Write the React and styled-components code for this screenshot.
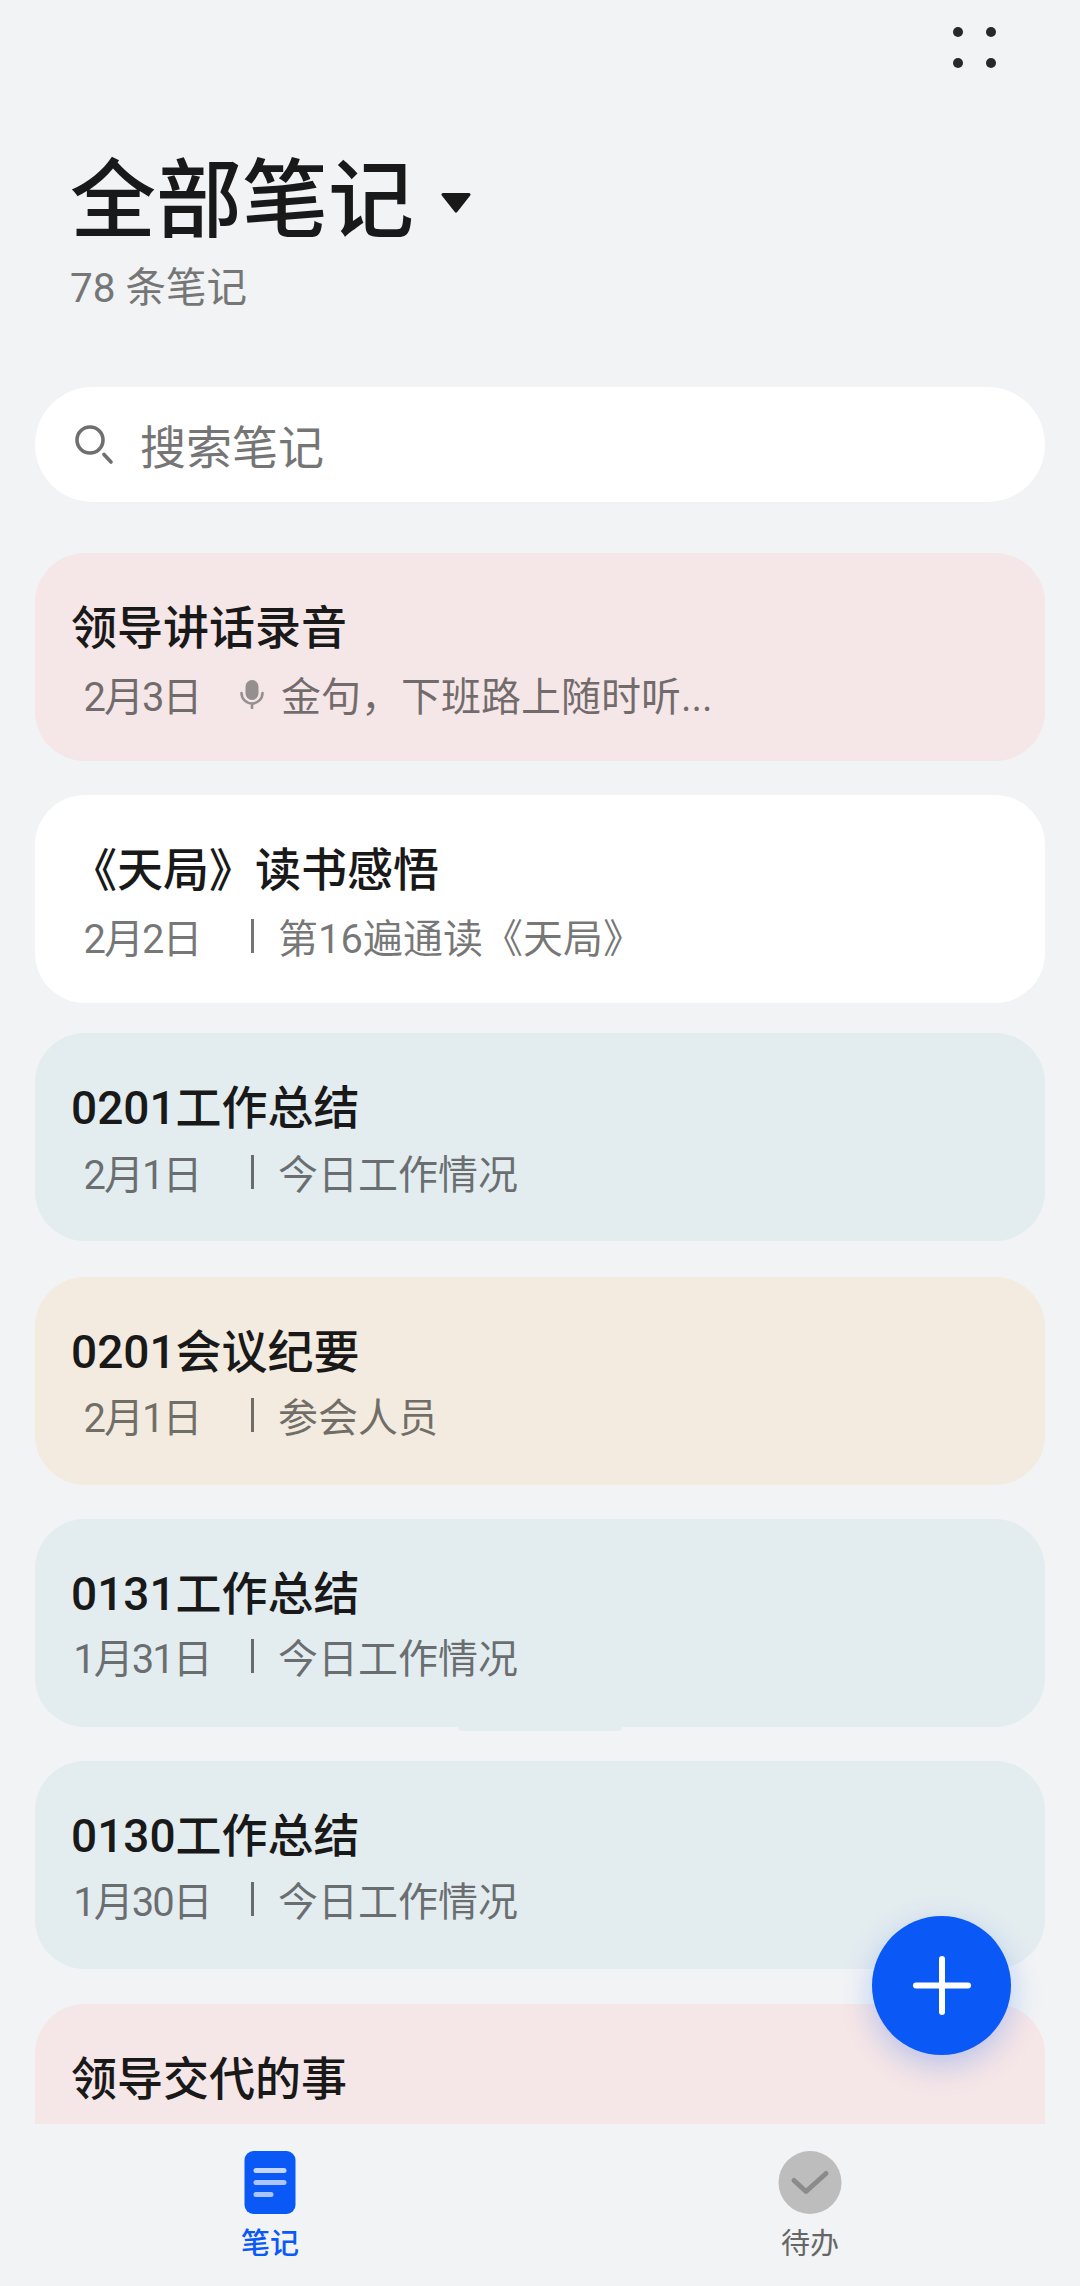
import React from 'react';
import styled, { createGlobalStyle } from 'styled-components';

const GlobalStyle = createGlobalStyle`
  html, body {
    margin: 0;
    padding: 0;
    background: #f1f3f5;
    font-family: Roboto, "Noto Sans CJK SC", sans-serif;
  }
`;

const Page = styled.div`
  position: relative;
  display: flex;
  flex-direction: column;
  width: 1080px;
  height: 2286px;
  overflow: hidden;
  background: #f1f3f5;
`;

const TopBar = styled.div`
  display: flex;
  justify-content: flex-end;
  height: 152px;
  padding: 27px 84px 0 0;
  box-sizing: border-box;
`;

const MoreButton = styled.div`
  display: grid;
  grid-template-columns: 10px 10px;
  grid-auto-rows: 10px;
  gap: 21px 23px;
  height: 41px;
`;

const Dot = styled.span`
  border-radius: 50%;
  background: #26282b;
`;

const Header = styled.div`
  padding-left: 70px;
  height: 235px;
`;

const TitleRow = styled.div`
  display: flex;
  align-items: center;
  gap: 27px;
  height: 100px;
`;

const Title = styled.h1`
  margin: 0;
  font-size: 86px;
  line-height: 100px;
  font-weight: 500;
  color: #191919;
`;

const Caret = styled.svg`
  width: 30px;
  height: 21px;
`;

const Count = styled.div`
  margin-top: 11px;
  font-size: 40.5px;
  line-height: 50px;
  color: #767676;
`;

const SearchBar = styled.div`
  display: flex;
  align-items: center;
  gap: 25px;
  height: 115px;
  margin: 0 35px;
  padding-left: 40px;
  border-radius: 58px;
  background: #fff;
  flex-shrink: 0;
`;

const Placeholder = styled.span`
  padding-bottom: 2px;
  font-size: 46px;
  color: #757575;
`;

const NoteList = styled.div`
  flex: 1;
  min-height: 0;
  overflow: hidden;
  margin: 51px 35px 0;
`;

const Card = styled.div`
  position: relative;
  height: 208px;
  margin-bottom: ${(p) => p.$gap}px;
  padding: 45px 0 0 36px;
  box-sizing: border-box;
  border-radius: 50px;
  background: ${(p) => p.$bg};
`;

/* little tab peeking out under the fifth card */
const Nub = styled.div`
  position: absolute;
  left: 422px;
  bottom: -4px;
  width: 166px;
  height: 6px;
  border-radius: 0 0 6px 6px;
  background: ${(p) => p.$bg};
`;

const NoteTitle = styled.div`
  font-size: 46px;
  line-height: 60px;
  font-weight: 500;
  color: #191919;
`;

const NoteMeta = styled.div`
  display: flex;
  align-items: center;
  margin-top: ${(p) => p.$top}px;
  height: 56px;
  font-size: 40px;
  color: rgba(0, 0, 0, 0.54);
  white-space: nowrap;
`;

const NoteDate = styled.span`
  width: 142px;
  text-align: center;
  letter-spacing: -2px;
  flex-shrink: 0;
`;

const Marker = styled.span`
  display: flex;
  justify-content: center;
  align-items: center;
  width: 26px;
  margin: 0 ${(p) => (p.$mic ? 16 : 13)}px 0 26px;
  flex-shrink: 0;
`;

const Bar = styled.span`
  width: 3px;
  height: 34px;
  background: rgba(0, 0, 0, 0.54);
`;

const Fab = styled.div`
  position: absolute;
  left: 872px;
  top: 1916px;
  display: flex;
  align-items: center;
  justify-content: center;
  width: 139px;
  height: 139px;
  border-radius: 50%;
  background: #0a59f7;
  box-shadow: 0 10px 30px rgba(10, 89, 247, 0.25);
`;

const TabBar = styled.div`
  display: grid;
  grid-template-columns: 1fr 1fr;
  height: 162px;
  background: #f1f3f5;
  flex-shrink: 0;
`;

const Tab = styled.div`
  display: flex;
  flex-direction: column;
  align-items: center;
  padding-top: 27px;
  gap: 12px;
`;

const TabLabel = styled.span`
  font-size: 29px;
  line-height: 36px;
  font-weight: ${(p) => (p.$active ? 500 : 400)};
  color: ${(p) => (p.$active ? '#0a59f7' : '#666')};
`;

const TabIcon = styled.svg`
  display: block;
  width: 66px;
  height: 63px;
`;

const PINK = '#f5e6e7';
const BLUE = '#e3ecef';
const TAN = '#f3ebdf';

const notes = [
  { title: '领导讲话录音', date: '2月3日', text: '金句，下班路上随时听...', bg: PINK, mic: true, gap: 34, top: 8 },
  { title: '《天局》读书感悟', date: '2月2日', text: '第16遍通读《天局》', bg: '#ffffff', gap: 30, top: 8 },
  { title: '0201工作总结', date: '2月1日', text: '今日工作情况', bg: BLUE, gap: 36, top: 6 },
  { title: '0201会议纪要', date: '2月1日', text: '参会人员', bg: TAN, gap: 34, top: 5 },
  { title: '0131工作总结', date: '1月31日', text: '今日工作情况', bg: BLUE, gap: 34, top: 4, nub: true },
  { title: '0130工作总结', date: '1月30日', text: '今日工作情况', bg: BLUE, gap: 35, top: 5 },
  { title: '领导交代的事', bg: PINK, gap: 35 },
];

const SearchIcon = () => (
  <svg width="40" height="40" viewBox="0 0 40 40" fill="none" stroke="#6f6f6f" strokeWidth="3.6" strokeLinecap="round">
    <circle cx="15" cy="15" r="13" />
    <path d="M29 29.5 L36 37" />
  </svg>
);

const MicIcon = () => (
  <svg width="24" height="29" viewBox="0 0 24 29" fill="none">
    <rect x="5.5" y="0" width="13" height="20" rx="6.5" fill="#959090" />
    <path d="M1.5 13a10.5 10.5 0 0 0 21 0M12 23.5V28" stroke="#959090" strokeWidth="2.6" strokeLinecap="round" />
  </svg>
);

const NoteCard = ({ note }) => (
  <Card $bg={note.bg} $gap={note.gap}>
    <NoteTitle>{note.title}</NoteTitle>
    {note.date && (
      <NoteMeta $top={note.top}>
        <NoteDate>{note.date}</NoteDate>
        <Marker $mic={note.mic}>{note.mic ? <MicIcon /> : <Bar />}</Marker>
        <span>{note.text}</span>
      </NoteMeta>
    )}
    {note.nub && <Nub $bg={note.bg} />}
  </Card>
);

const App = () => (
  <Page>
    <GlobalStyle />
    <TopBar>
      <MoreButton>
        <Dot />
        <Dot />
        <Dot />
        <Dot />
      </MoreButton>
    </TopBar>
    <Header>
      <TitleRow>
        <Title>全部笔记</Title>
        <Caret viewBox="0 0 30 21">
          <path d="M2 1h26a1.5 1.5 0 0 1 1.2 2.4L16.2 20a1.5 1.5 0 0 1-2.4 0L.8 3.4A1.5 1.5 0 0 1 2 1z" fill="#191919" />
        </Caret>
      </TitleRow>
      <Count>78 条笔记</Count>
    </Header>
    <SearchBar>
      <SearchIcon />
      <Placeholder>搜索笔记</Placeholder>
    </SearchBar>
    <NoteList>
      {notes.map((note) => (
        <NoteCard key={note.title} note={note} />
      ))}
    </NoteList>
    <TabBar>
      <Tab>
        <TabIcon viewBox="0 0 66 63">
          <rect x="7.5" y="0" width="51" height="63" rx="9" fill="#0a59f7" />
          <rect x="16.5" y="17" width="33" height="5" rx="2.5" fill="#c4d6fc" />
          <rect x="16.5" y="29" width="33" height="5" rx="2.5" fill="#a9c5fc" />
          <rect x="16.5" y="41" width="20" height="5" rx="2.5" fill="#a9c5fc" />
        </TabIcon>
        <TabLabel $active>笔记</TabLabel>
      </Tab>
      <Tab>
        <TabIcon viewBox="0 0 66 63">
          <circle cx="33" cy="31.5" r="31.5" fill="#bdbdbe" />
          <path d="M17 29.5L29 40.5L49 22.5" fill="none" stroke="#8b8b8c" strokeWidth="5" strokeLinecap="round" strokeLinejoin="round" />
        </TabIcon>
        <TabLabel>待办</TabLabel>
      </Tab>
    </TabBar>
    <Fab>
      <svg width="58" height="59" viewBox="0 0 58 59" fill="#fff">
        <rect x="26" y="0" width="6" height="59" rx="3" />
        <rect x="0" y="26.5" width="58" height="6" rx="3" />
      </svg>
    </Fab>
  </Page>
);

export default App;
